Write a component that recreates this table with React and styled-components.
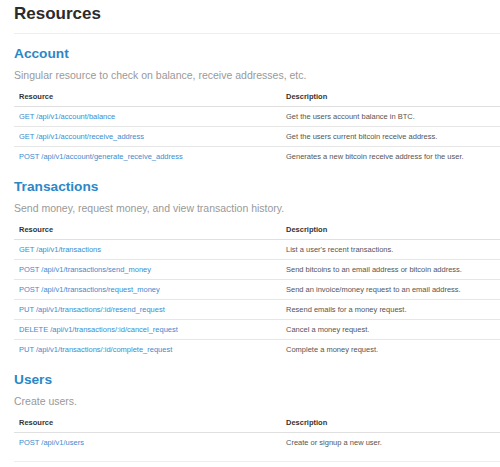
import React from "react";
import styled, { createGlobalStyle } from "styled-components";

const Global = createGlobalStyle`
  html, body { margin: 0; padding: 0; background: #fff; overflow: hidden; }
  body { font-family: "Liberation Sans", Arial, Helvetica, sans-serif; -webkit-font-smoothing: antialiased; }
`;

const Page = styled.div`
  padding: 4px 0 0 14px;
`;

const Title = styled.h1`
  margin: 0;
  font-size: 17px;
  line-height: 20px;
  font-weight: 700;
  color: #2b2b2b;
  padding-bottom: 9px;
  border-bottom: 1px solid #eee;
`;

const Section = styled.section`
  margin-top: ${(p) => p.$gap}px;
`;

const Heading = styled.h2`
  margin: 0;
  font-size: 13.7px;
  line-height: 18px;
  font-weight: 700;
  color: #2c87c6;
`;

const Lead = styled.p`
  margin: 5px 0 0;
  font-size: 10.5px;
  line-height: 14px;
  color: #999;
`;

const Table = styled.table`
  margin-top: 5px;
  width: 100%;
  border-collapse: collapse;
  font-size: 7.5px;
  line-height: 9px;
`;

const Th = styled.th`
  text-align: left;
  font-weight: 700;
  color: #333;
  padding: 5px;
  border-bottom: 1px solid #e0e0e0;
  width: ${(p) => (p.$first ? "257px" : "auto")};
`;

const Row = styled.tr`
  & + & td { border-top: 1px solid #e6e6e6; }
`;

const Td = styled.td`
  padding: 5px;
  color: #555;
  white-space: nowrap;
`;

const Link = styled.a`
  color: #3a8dcf;
  text-decoration: none;
`;

const Divider = styled.div`
  margin-top: 9px;
  border-top: 1px solid #eee;
`;

const sections = [
  {
    title: "Account",
    lead: "Singular resource to check on balance, receive addresses, etc.",
    rows: [
      ["GET /api/v1/account/balance", "Get the users account balance in BTC."],
      ["GET /api/v1/account/receive_address", "Get the users current bitcoin receive address."],
      ["POST /api/v1/account/generate_receive_address", "Generates a new bitcoin receive address for the user."],
    ],
  },
  {
    title: "Transactions",
    lead: "Send money, request money, and view transaction history.",
    rows: [
      ["GET /api/v1/transactions", "List a user's recent transactions."],
      ["POST /api/v1/transactions/send_money", "Send bitcoins to an email address or bitcoin address."],
      ["POST /api/v1/transactions/request_money", "Send an invoice/money request to an email address."],
      ["PUT /api/v1/transactions/:id/resend_request", "Resend emails for a money request."],
      ["DELETE /api/v1/transactions/:id/cancel_request", "Cancel a money request."],
      ["PUT /api/v1/transactions/:id/complete_request", "Complete a money request."],
    ],
  },
  {
    title: "Users",
    lead: "Create users.",
    rows: [["POST /api/v1/users", "Create or signup a new user."]],
  },
];

export default function App() {
  return (
    <>
      <Global />
      <Page>
        <Title>Resources</Title>
        {sections.map((s, i) => (
          <Section key={s.title} $gap={i === 0 ? 11 : 12}>
            <Heading>{s.title}</Heading>
            <Lead>{s.lead}</Lead>
            <Table>
              <thead>
                <tr>
                  <Th $first>Resource</Th>
                  <Th>Description</Th>
                </tr>
              </thead>
              <tbody>
                {s.rows.map(([r, d]) => (
                  <Row key={r}>
                    <Td>
                      <Link href="#">{r}</Link>
                    </Td>
                    <Td>{d}</Td>
                  </Row>
                ))}
              </tbody>
            </Table>
          </Section>
        ))}
        <Divider />
      </Page>
    </>
  );
}
